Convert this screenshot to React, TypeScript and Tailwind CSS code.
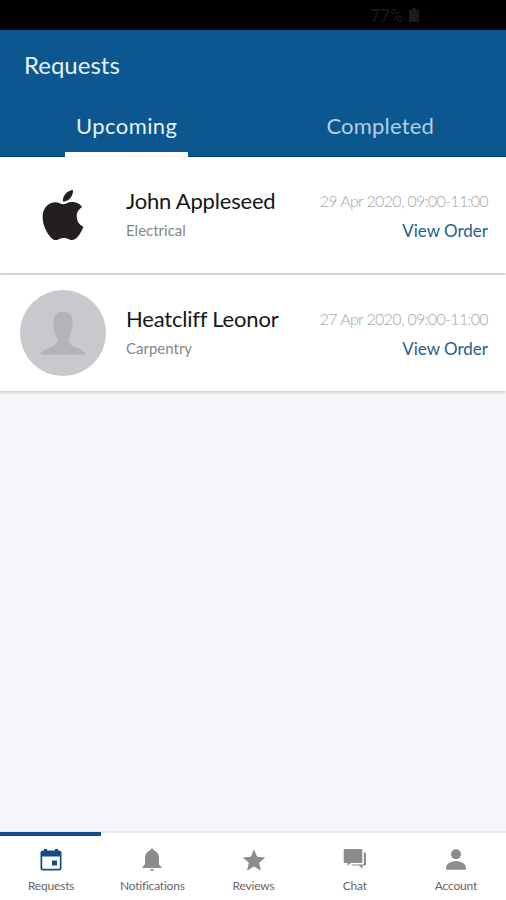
import React from "react";
import { IoMdStar } from "react-icons/io";
import { SiApple } from "react-icons/si";

interface Order {
  id: number;
  name: string;
  service: string;
  date: string;
  logo?: boolean;
}

const orders: Order[] = [
  {
    id: 1,
    name: "John Appleseed",
    service: "Electrical",
    date: "29 Apr 2020, 09:00-11:00",
    logo: true,
  },
  {
    id: 2,
    name: "Heatcliff Leonor",
    service: "Carpentry",
    date: "27 Apr 2020, 09:00-11:00",
  },
];

const CalendarIcon = ({ className }: { className?: string }) => (
  <svg viewBox="0 0 26 26" fill="currentColor" className={className}>
    <path
      fillRule="evenodd"
      d="M6 2h3v1.500h8V2h3v1.500h1a2.500 2.500 0 0 1 2.500 2.500v15a2.500 2.500 0 0 1-2.500 2.500H5A2.500 2.500 0 0 1 2.500 21V6A2.500 2.500 0 0 1 5 3.500h1zM4.200 9.500V21a.8.8 0 0 0 .8.8h16a.8.8 0 0 0 .8-.8V9.500z"
    />
    <path d="M14 13.500h5v5h-5z" />
  </svg>
);

const BellIcon = ({ className }: { className?: string }) => (
  <svg viewBox="0 0 26 26" fill="currentColor" className={className}>
    <path d="M13 1.500c-1 0-1.600.7-1.800 1.700C7.700 4.300 6 7.200 6 11v5.500c0 1.500-1 2.300-2.700 3.500V21h19.400v-1c-1.700-1.200-2.700-2-2.700-3.500V11c0-3.800-1.700-6.700-5.200-7.800-.2-1-.8-1.700-1.800-1.700z" />
    <path d="M11 22.200h4a2 1.800 0 0 1-4 0z" />
  </svg>
);

const StarIcon = ({ className }: { className?: string }) => (
  <IoMdStar className={`scale-110 ${className}`} />
);

const ChatIcon = ({ className }: { className?: string }) => (
  <svg viewBox="0 0 26 26" fill="currentColor" className={className}>
    <path d="M2.500 2h17a.8.8 0 0 1 .8.8v12.400a.8.8 0 0 1-.8.8H8.800l-3.300 3V16h-3a.8.8 0 0 1-.8-.8V2.800a.8.8 0 0 1 .8-.8z" />
    <path d="M21.800 5.500h1.400a.8.8 0 0 1 .8.8v11.400a.8.8 0 0 1-.8.8h-2.700v3.200l-3.700-3.200H9.500v-1h11.500a.8.8 0 0 0 .8-.8z" />
  </svg>
);

const PersonIcon = ({ className }: { className?: string }) => (
  <svg viewBox="0 0 26 26" fill="currentColor" className={className}>
    <circle cx="13" cy="7.300" r="5" />
    <path d="M3 22.700v-1.500c0-4.500 4.500-7 10-7s10 2.500 10 7v1.500z" />
  </svg>
);

const navItems = [
  { label: "Requests", icon: CalendarIcon, active: true },
  { label: "Notifications", icon: BellIcon },
  { label: "Reviews", icon: StarIcon },
  { label: "Chat", icon: ChatIcon },
  { label: "Account", icon: PersonIcon },
];

const Avatar = ({ logo }: { logo?: boolean }) => {
  if (logo) {
    return (
      <div className="flex size-[86px] items-center justify-center rounded-full bg-white">
        <SiApple className="size-[50px] text-[#231f20]" />
      </div>
    );
  }
  return (
    <svg viewBox="0 0 86 86" className="size-[86px]">
      <circle cx="43" cy="43" r="43" fill="#c7c9cd" />
      <path
        d="M43 21.500c-6 0-9.500 4-9.500 10 0 2 0 3 .2 4-.9 1-.2 5 1.300 6 .5 4 1.800 6 2.500 7.500 0 2-.3 3.500-1.500 5-3 4-13 4-16 10.500h46c-3-6.500-13-6.500-16-10.500-1.200-1.500-1.500-3-1.500-5 .7-1.500 2-3.500 2.500-7.500 1.500-1 2.200-5 1.300-6 .2-1 .2-2 .2-4 0-6-3.500-10-9.500-10z"
        fill="#b1b3b6"
      />
    </svg>
  );
};

const App = () => {
  return (
    <div className="flex h-[900px] w-full flex-col overflow-hidden bg-[#f4f6f9] font-['Lato',sans-serif]">
      <div className="flex h-[30px] shrink-0 items-center bg-black pl-[370px] font-['Roboto',sans-serif] text-[18px] text-[#1c1c1c]">
        77%
        <svg viewBox="0 0 10 14" className="ml-1.5 h-3.5 w-2.5">
          <path d="M3 0h4v2h3v12H0V2h3z" fill="#1c1c1c" />
        </svg>
      </div>

      <header className="flex h-[127px] shrink-0 flex-col border-b border-[#06406f] bg-[#0c578f]">
        <h1 className="pt-5 pl-6 text-[24px] leading-[30px] text-[#e6f1fb]">
          Requests
        </h1>
        <div className="flex flex-1 text-[22px]">
          <button className="flex flex-1 flex-col items-center justify-end pl-px text-[#e6f1fb]">
            <span className="mb-[11px] leading-[30px] tracking-[0.4px]">
              Upcoming
            </span>
            <span className="-mb-px h-[5px] w-[123px] bg-white" />
          </button>
          <button className="flex flex-1 flex-col items-center justify-end pl-0.5 text-[#b3cee3]">
            <span className="mb-[15px] leading-[30px] tracking-[0.2px]">
              Completed
            </span>
          </button>
        </div>
      </header>

      <main className="flex flex-1 flex-col gap-0.5">
        {orders.map((order) => (
          <div
            key={order.id}
            className="flex h-[116px] items-center bg-white pr-[18px] pl-5 shadow-[0_1px_3px_rgba(0,0,0,0.22)]"
          >
            <Avatar logo={order.logo} />
            <div className="ml-5 flex-1">
              <p className="text-[22px] leading-[30px] tracking-[-0.2px] text-[#161616]">
                {order.name}
              </p>
              <p className="text-[15px] leading-7 text-[#858585]">
                {order.service}
              </p>
            </div>
            <div className="text-right">
              <p className="text-[16px] leading-[30px] font-light tracking-[-0.66px] text-[#a5a5a5]">
                {order.date}
              </p>
              <a
                href="#"
                className="block pt-px text-[17px] leading-[27px] text-[#245f89]"
              >
                View Order
              </a>
            </div>
          </div>
        ))}
      </main>

      <nav className="flex h-[69px] shrink-0 border-t-2 border-[#e9ebed] bg-white">
        {navItems.map(({ label, icon: Icon, active }) => (
          <a
            key={label}
            href="#"
            className="-mt-0.5 flex flex-1 flex-col items-center"
          >
            <span
              className={`mt-px h-1 w-full ${active ? "bg-[#124c87]" : ""}`}
            />
            <Icon
              className={`mt-[11px] ml-px size-[26px] ${active ? "text-[#124c87]" : "text-[#8c8c8c]"}`}
            />
            <span className="mt-1 pt-px pl-px text-[12px] leading-4 tracking-[-0.2px] text-[#666]">
              {label}
            </span>
          </a>
        ))}
      </nav>
    </div>
  );
};

export default App;
